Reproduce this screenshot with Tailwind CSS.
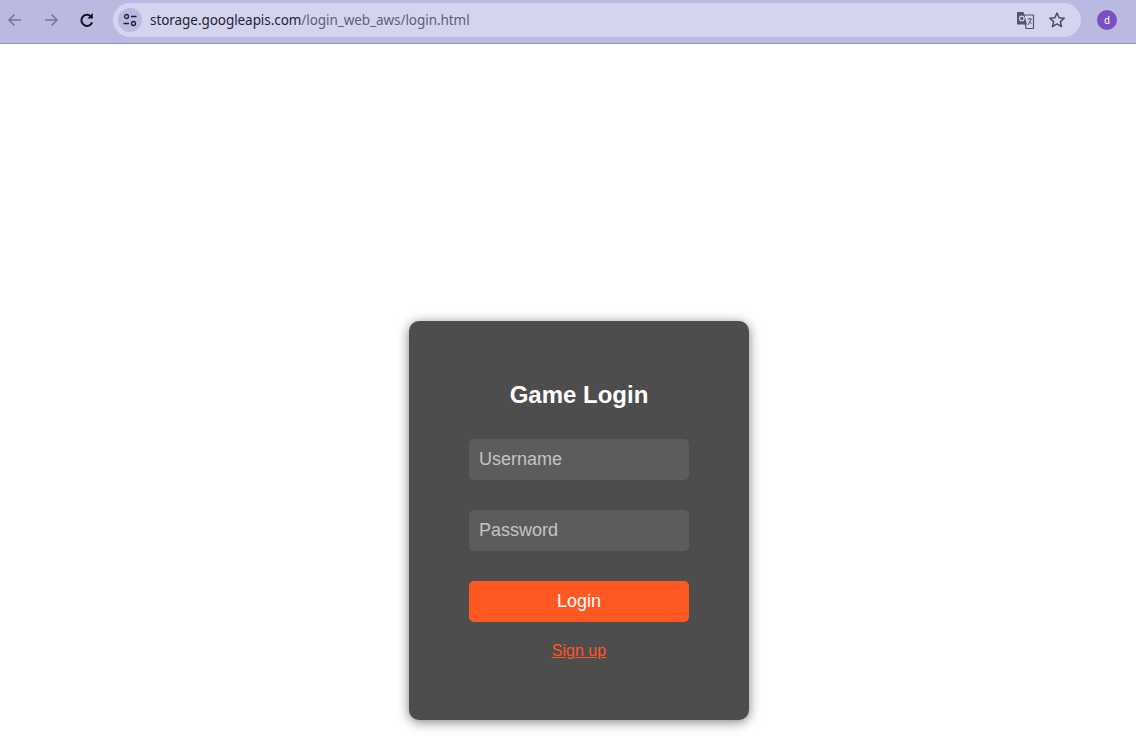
<!DOCTYPE html>
<html lang="en">
<head>
    <meta charset="UTF-8">
    <meta name="viewport" content="width=device-width, initial-scale=1.0">
    <title>Game Login</title>
    <script src="https://cdn.jsdelivr.net/npm/@tailwindcss/browser@4"></script>
</head>
<body class="h-[745px] overflow-hidden bg-white font-['Liberation_Sans',sans-serif]">
    <!-- Browser toolbar -->
    <div class="h-[44px] flex items-center bg-[#b9b9e2] border-b border-[#9090b4] pl-[3px]">
        <button class="w-5 h-5 ml-0.5 mt-[-3px] text-[#74749a]">
            <svg viewBox="0 0 20 20" class="w-5 h-5" fill="none" stroke="currentColor" stroke-width="1.5"><path d="M16 10H4.500M9.500 4.500 4 10l5.500 5.500"/></svg>
        </button>
        <button class="w-5 h-5 ml-[16px] mt-[-3px] text-[#74749a]">
            <svg viewBox="0 0 20 20" class="w-5 h-5" fill="none" stroke="currentColor" stroke-width="1.5"><path d="M4 10h11.500M10.500 4.500 16 10l-5.500 5.500"/></svg>
        </button>
        <button class="w-5 h-5 ml-[16px] mt-[-3px] text-[#111122]">
            <svg viewBox="0 0 20 20" class="w-5 h-5" fill="none" stroke="currentColor" stroke-width="2"><path d="M15.200 12.400A5.600 5.600 0 1 1 13.800 6.200"/><path d="M15.800 3v5.500h-5.500z" fill="currentColor" stroke="none"/></svg>
        </button>
        <div class="ml-4 w-[968px] h-[34px] mt-[-3px] rounded-full bg-[#d4d4ef] flex items-center pl-[5px] pr-[14px]">
            <span class="w-6 h-6 rounded-full bg-[#b9b9e2] flex items-center justify-center text-[#1f1f33]">
                <svg viewBox="0 0 16 16" class="w-4 h-4" fill="none" stroke="currentColor" stroke-width="1.300"><circle cx="4.500" cy="4.500" r="2"/><path d="M9 4.500h5.500M1.500 11.500H7"/><circle cx="11.500" cy="11.500" r="2"/></svg>
            </span>
            <span class="ml-2 text-[13.5px] tracking-[-0.06px] font-['Noto_Sans',sans-serif] text-[#1f1f33]">storage.googleapis.com<span class="text-[#5f5f78]">/login_web_aws/login.html</span></span>
            <svg viewBox="0 0 20 20" class="w-5 h-5 ml-auto text-[#55556a]"><path d="M9 5h9.500v13.500H11z" fill="#d4d4ef" stroke="currentColor" stroke-width="1.200"/><path d="M2 2h6.500L12 14.500H2z" fill="currentColor"/><circle cx="6.800" cy="8.500" r="2.300" fill="none" stroke="#d4d4ef" stroke-width="1.200"/><path d="M12.500 9h4.500M14.800 8v1M13 15l3.200-5.500M13.800 11l2.700 3" fill="none" stroke="currentColor" stroke-width="1"/></svg>
            <svg viewBox="0 0 20 20" class="w-5 h-5 ml-3 text-[#4a4a60]" fill="none" stroke="currentColor" stroke-width="1.500"><path d="m10 3 2.100 4.700 5.100.5-3.800 3.400 1.100 5L10 13.900l-4.500 2.700 1.100-5-3.800-3.400 5.100-.5z" stroke-linejoin="round"/></svg>
        </div>
        <span class="ml-[16px] mt-[-3px] w-5 h-5 rounded-full bg-[#7c4fc0] text-white text-[10px] flex items-center justify-center">d</span>
    </div>

    <!-- Login card -->
    <main class="flex justify-center pt-[277px] pl-[22px]">
        <div class="w-[340px] h-[399px] px-[60px] pt-[60px] bg-[#4d4d4d] rounded-[10px] shadow-[0_2px_12px_rgba(0,0,0,0.5)] text-center">
            <h2 class="text-[24px] leading-[28px] font-bold text-white mb-[30px]">Game Login</h2>
            <form class="flex flex-col gap-[30px]">
                <input type="text" placeholder="Username" class="w-full h-[41px] px-2.5 rounded-[5px] bg-[#5c5c5c] text-[18px] text-white placeholder:text-[#c4c4c4] outline-none">
                <input type="password" placeholder="Password" class="w-full h-[41px] px-2.5 rounded-[5px] bg-[#5c5c5c] text-[18px] text-white placeholder:text-[#c4c4c4] outline-none">
                <button type="button" class="w-full h-[41px] rounded-[5px] bg-[#ff5722] text-[18px] text-white">Login</button>
            </form>
            <a href="#" class="inline-block mt-[20px] text-[16px] leading-[18px] text-[#ff5722] underline">Sign up</a>
        </div>
    </main>
</body>
</html>
